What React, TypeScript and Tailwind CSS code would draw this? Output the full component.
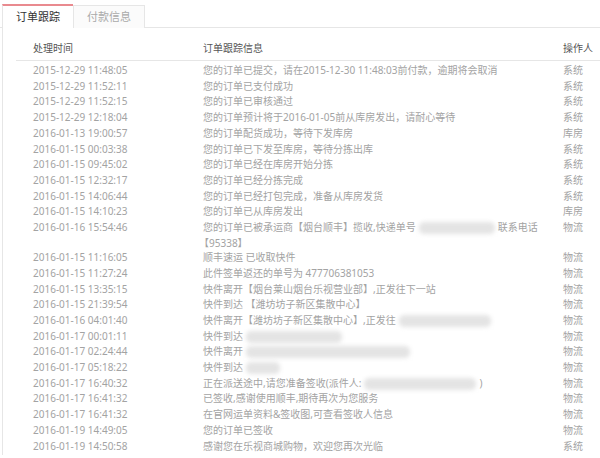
type Seg = string | { blur: number };

type Row = {
    time: string;
    info: Seg[];
    second?: string;
    op: string;
};

const rows: Row[] = [
    { time: "2015-12-29 11:48:05", info: ["您的订单已提交，请在2015-12-30 11:48:03前付款，逾期将会取消"], op: "系统" },
    { time: "2015-12-29 11:52:11", info: ["您的订单已支付成功"], op: "系统" },
    { time: "2015-12-29 11:52:15", info: ["您的订单已审核通过"], op: "系统" },
    { time: "2015-12-29 12:18:04", info: ["您的订单预计将于2016-01-05前从库房发出，请耐心等待"], op: "系统" },
    { time: "2016-01-13 19:00:57", info: ["您的订单配货成功，等待下发库房"], op: "库房" },
    { time: "2016-01-15 00:03:38", info: ["您的订单已下发至库房，等待分拣出库"], op: "系统" },
    { time: "2016-01-15 09:45:02", info: ["您的订单已经在库房开始分拣"], op: "系统" },
    { time: "2016-01-15 12:32:17", info: ["您的订单已经分拣完成"], op: "系统" },
    { time: "2016-01-15 14:06:44", info: ["您的订单已经打包完成，准备从库房发货"], op: "系统" },
    { time: "2016-01-15 14:10:23", info: ["您的订单已从库房发出"], op: "库房" },
    {
        time: "2016-01-16 15:54:46",
        info: ["您的订单已被承运商【烟台顺丰】揽收,快递单号", { blur: 76 }, "联系电话"],
        second: "【95338】",
        op: "物流",
    },
    { time: "2016-01-15 11:16:05", info: ["顺丰速运 已收取快件"], op: "物流" },
    { time: "2016-01-15 11:27:24", info: ["此件签单返还的单号为 477706381053"], op: "物流" },
    { time: "2016-01-15 13:35:15", info: ["快件离开【烟台莱山烟台乐视营业部】,正发往下一站"], op: "物流" },
    { time: "2016-01-15 21:39:54", info: ["快件到达 【潍坊坊子新区集散中心】"], op: "物流" },
    { time: "2016-01-16 04:01:40", info: ["快件离开【潍坊坊子新区集散中心】,正发往", { blur: 92 }], op: "物流" },
    { time: "2016-01-17 00:01:11", info: ["快件到达", { blur: 96 }], op: "物流" },
    { time: "2016-01-17 02:24:44", info: ["快件离开", { blur: 164 }], op: "物流" },
    { time: "2016-01-17 05:18:22", info: ["快件到达", { blur: 34 }], op: "物流" },
    { time: "2016-01-17 16:40:32", info: ["正在派送途中,请您准备签收(派件人:", { blur: 112 }, ")"], op: "物流" },
    { time: "2016-01-17 16:41:32", info: ["已签收,感谢使用顺丰,期待再次为您服务"], op: "物流" },
    { time: "2016-01-17 16:41:32", info: ["在官网运单资料&签收图,可查看签收人信息"], op: "物流" },
    { time: "2016-01-19 14:49:05", info: ["您的订单已签收"], op: "物流" },
    { time: "2016-01-19 14:50:58", info: ["感谢您在乐视商城购物，欢迎您再次光临"], op: "系统" },
];

export default function App() {
    return (
        <div className="w-[600px] h-[458px] bg-white overflow-hidden font-['Noto_Sans','Noto_Sans_CJK_SC',sans-serif]">
            {/* tabs */}
            <div className="flex pt-[4px] pl-[2px] border-b border-[#e6e6e6] h-[28px]">
                <div className="w-[71px] h-[24px] border-t-2 border-[#e98a8f] border-l border-l-[#e6e6e6] bg-white text-[11px] text-[#333] flex items-center justify-center -mb-px">
                    订单跟踪
                </div>
                <div className="w-[72px] h-[23px] mt-px border border-b-0 border-[#e6e6e6] bg-[#fbfbfb] text-[11px] text-[#aaa] flex items-center justify-center">
                    付款信息
                </div>
            </div>

            {/* body */}
            <div className="ml-[2px] border-l border-[#e6e6e6] h-[427px]">
                <div className="ml-[13px]">
                    <div className="flex items-end h-[33px] pb-[4px] border-b border-[#e6e6e6] text-[10px] text-[#555]">
                        <div className="w-[187px] pl-[17px]">处理时间</div>
                        <div className="w-[360px]">订单跟踪信息</div>
                        <div>操作人</div>
                    </div>

                    <div className="pt-[2px] text-[10px] text-[#a3a3a3]">
                        {rows.map((row, i) => (
                            <div key={i} className="flex leading-[15.7px]">
                                <div className="w-[187px] pl-[17px] shrink-0">{row.time}</div>
                                <div className="w-[360px] shrink-0">
                                    <div className="flex items-center whitespace-nowrap">
                                        {row.info.map((seg, j) =>
                                            typeof seg === "string" ? (
                                                <span key={j}>{seg}</span>
                                            ) : (
                                                <span
                                                    key={j}
                                                    className="inline-block h-[12px] mx-[3px] rounded-[5px] bg-[#e4e4e4] blur-[2px]"
                                                    style={{ width: seg.blur }}
                                                />
                                            )
                                        )}
                                    </div>
                                    {row.second && <div className="-ml-[4px] leading-[14.4px]">{row.second}</div>}
                                </div>
                                <div className="shrink-0">{row.op}</div>
                            </div>
                        ))}
                    </div>
                </div>
            </div>
        </div>
    );
}
